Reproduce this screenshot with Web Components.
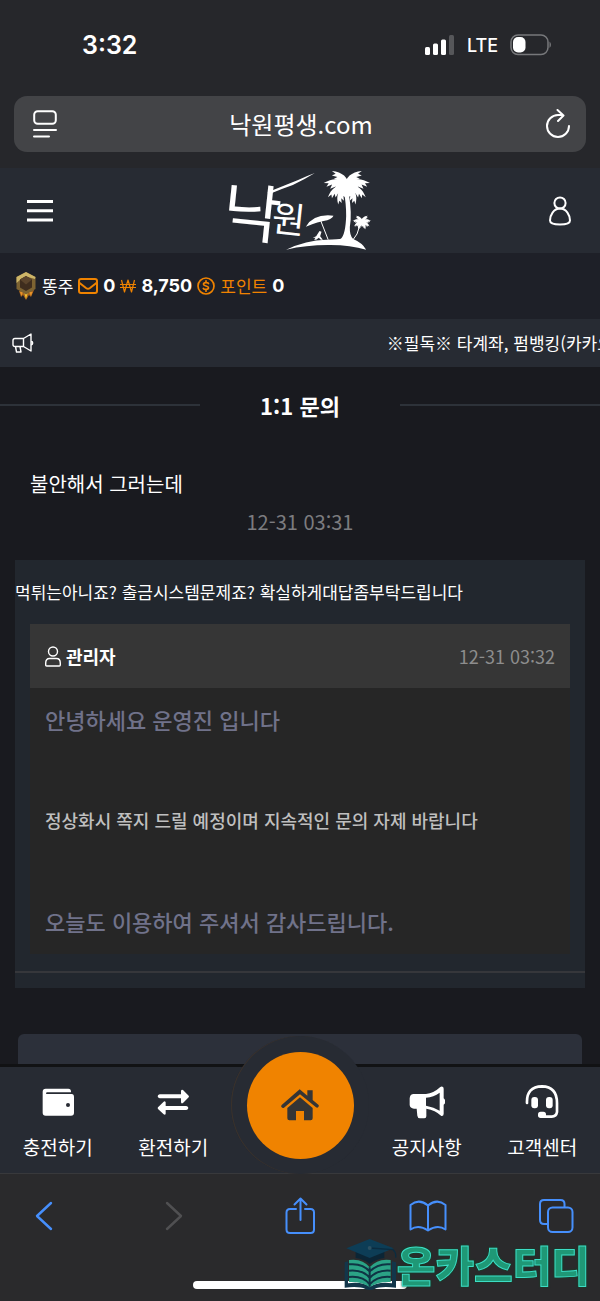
<!DOCTYPE html>
<html lang="ko">
<head>
<meta charset="utf-8">
<meta name="viewport" content="width=device-width, initial-scale=1">
<title>1:1 문의</title>
<style>
    html, body {
        margin: 0;
        height: 100%;
        background: #191a1f;
    }

    body {
        font-family: "Noto Sans CJK KR", sans-serif;
        color: #fff;
    }
</style>
</head>
<body>

<phone-screen>
    <status-bar slot="top" time="3:32" network="LTE"></status-bar>
    <address-bar slot="top">낙원평생.com</address-bar>

    <site-header></site-header>
    <member-bar name="똥주" notes="0" cash="8,750" points="0"></member-bar>
    <notice-ticker>※필독※ 타계좌, 펌뱅킹(카카오</notice-ticker>
    <page-title>1:1 문의</page-title>
    <inquiry-post date="12-31 03:31">
        <span slot="subject">불안해서 그러는데</span>
        먹튀는아니죠? 출금시스템문제죠? 확실하게대답좀부탁드립니다
        <admin-reply slot="reply" author="관리자" date="12-31 03:32">
            <span slot="greeting">안녕하세요 운영진 입니다</span>
            정상화시 쪽지 드릴 예정이며 지속적인 문의 자제 바랍니다
            <span slot="closing">오늘도 이용하여 주셔서 감사드립니다.</span>
        </admin-reply>
    </inquiry-post>
    <next-panel></next-panel>

    <site-nav slot="bottom">
        <nav-item icon="wallet">충전하기</nav-item>
        <nav-item icon="exchange">환전하기</nav-item>
        <home-button></home-button>
        <nav-item icon="horn">공지사항</nav-item>
        <nav-item icon="headset">고객센터</nav-item>
    </site-nav>
    <browser-toolbar slot="bottom"></browser-toolbar>
    <corner-mark slot="bottom">온카스터디</corner-mark>
</phone-screen>

<script>
const icons = {
    reader: `<svg width="24" height="28" viewBox="0 0 24 28" fill="none" stroke="currentColor" stroke-width="2" stroke-linecap="round">
        <rect x="1.2" y="1.2" width="21.6" height="12.6" rx="3.5"/><path d="M1 20h22M1 26.500h15"/></svg>`,
    reload: `<svg width="26" height="30" viewBox="0 0 26 30" fill="none" stroke="currentColor" stroke-width="2" stroke-linecap="round" stroke-linejoin="round">
        <path d="M24 17a11 11 0 1 1-11-11h5M12.500 1l6 5.500-5.500 5.500"/></svg>`,
    menu: `<svg width="26" height="22" viewBox="0 0 26 22" fill="currentColor">
        <path d="M0 0h26v3H0zM0 9.300h26v3H0zM0 18.500h26v3H0z"/></svg>`,
    person: `<svg width="24" height="30" viewBox="0 0 24 30" fill="none" stroke="currentColor" stroke-width="2">
        <circle cx="12" cy="7" r="5.600"/><path d="M12 12.600c-6.500 0-10 6.500-10 12 0 3 5 4 10 4s10-1 10-4c0-5.500-3.500-12-10-12z"/></svg>`,
    badge: `<svg width="22" height="30" viewBox="0 0 22 30">
        <path d="M4 20l2 6 2-2 3 5 3-5 2 2 3-7z" fill="#a8641c"/><path d="M9 21l2 7 2-7z" fill="#f5c332"/>
        <path d="M5 21l1.500 4L8 21zM14 21l2 4 1.500-4z" fill="#e8932a"/>
        <path d="M11 1l9.500 5v12L11 23.500 1.500 18V6z" fill="#7d6332"/>
        <path d="M11 1L1.500 6v6L6 8l5-2.500L20 8l.5-2z" fill="#cdb568"/>
        <path d="M11 5l6 3.500v8L11 20l-6-3.500v-8z" fill="#3f2d1e"/><path d="M11 5l6 3.500-6 5-6-5z" fill="#5b442c"/></svg>`,
    mail: `<svg width="20" height="16" viewBox="0 0 20 16" fill="none" stroke="currentColor" stroke-width="2" stroke-linejoin="round">
        <rect x="1" y="1" width="18" height="14" rx="2"/><path d="M1 4.500l7 5.500q2 1.400 4 0l7-5.500"/></svg>`,
    won: `<svg width="16" height="14" viewBox="0 0 16 14" fill="none" stroke="currentColor" stroke-width="1.200" stroke-linejoin="round">
        <path d="M1.500 1l3 12L8 1l3.500 12 3-12M0 5.500h16M0 8.500h16"/></svg>`,
    coin: `<svg width="18" height="18" viewBox="0 0 18 18" fill="none" stroke="currentColor" stroke-width="1.700" stroke-linecap="round">
        <circle cx="9" cy="9" r="8"/><path d="M11.500 6.500C11 5.300 6.500 5 6.500 7.200c0 2.300 5 1.300 5 3.600 0 2.200-4.500 2-5.200.6M9 3.800v1.400M9 12.700v1.500"/></svg>`,
    megaphone: `<svg width="22" height="20" viewBox="0 0 22 20" fill="none" stroke="currentColor" stroke-width="1.400" stroke-linejoin="round">
        <path d="M3 5.500h8.500L19 1v17l-7.500-4.500H3q-2 0-2-2v-4q0-2 2-2zM11.500 5.500v8M3.500 13.500L4.500 19h4.500l-1-5.500M19 8q1.700.5 1.700 2T19 12"/></svg>`,
    user: `<svg width="16" height="21" viewBox="0 0 16 21" fill="none" stroke="currentColor" stroke-width="1.400">
        <circle cx="8" cy="5.500" r="4.500"/><path d="M4.500 12.500h7q3.800 0 3.800 4.500v2q0 1-1 1H1.700q-1 0-1-1v-2q0-4.500 3.800-4.500z"/></svg>`,
    // the bar icons share one 36x34 frame, drawn at three units per pixel
    wallet: `<svg width="36" height="34" viewBox="0 0 108 102" fill="currentColor">
        <path d="M17 11h68q8 0 8 9v2H22q-4 0-4 3t4 2h73q7 0 7 9v47q0 9-9 9H17q-9 0-9-9V20q0-9 9-9z"/><circle cx="84" cy="60" r="6" fill="#272b33"/></svg>`,
    exchange: `<svg width="36" height="34" viewBox="0 0 108 102" fill="currentColor">
        <path d="M14 28h64V17q2-5 6-2l17 17q2 2 0 5L84 54q-5 3-6-2V40H14q-6-1-6-6t6-6zM94 63H32V52q-2-5-6-2L9 67q-2 2 0 5l17 16q5 3 6-2V75h62q6-1 6-6t-6-6z"/></svg>`,
    horn: `<svg width="36" height="34" viewBox="0 0 108 102" fill="currentColor">
        <path fill-rule="evenodd" d="M14 27h37q23-2 42-20 5-5 9-1 2 2 2 6v28q5 4 5 10t-5 9v27q0 8-7 7-18-18-45-22v20q1 9-6 9H33q-7 0-8-8l-2-21h-8Q3 70 2 60V40q1-13 12-13zM51 38v24q24 4 41 15V23Q74 36 51 38z"/></svg>`,
    headset: `<svg width="36" height="34" viewBox="0 0 108 102" fill="currentColor">
        <path d="M9 54q-2-49 45-50 45 1 45 50v27q-2 13-16 14H54" fill="none" stroke="currentColor" stroke-width="8" stroke-linecap="round"/>
        <rect x="22" y="36" width="20" height="34" rx="9"/><rect x="66" y="36" width="20" height="34" rx="9"/><rect x="42" y="80" width="24" height="19" rx="8"/></svg>`,
    home: `<svg width="38" height="32" viewBox="0 0 114 96" fill="currentColor">
        <path d="M56 1L79 20V4h16v29l17 14q3 3 0 7t-7 1L57 16 9 56q-4 2-7-1t0-7zM57 25l38 32v31q0 6-6 6H69V66H45v28H25q-6 0-6-6V57z"/></svg>`,
    back: `<svg width="36" height="40" viewBox="0 0 36 40" fill="none" stroke="currentColor" stroke-width="2.400" stroke-linecap="round" stroke-linejoin="round"><path d="M25 7L11 20l14 13"/></svg>`,
    forward: `<svg width="36" height="40" viewBox="0 0 36 40" fill="none" stroke="currentColor" stroke-width="2.400" stroke-linecap="round" stroke-linejoin="round"><path d="M13 7l14 13-14 13"/></svg>`,
    share: `<svg width="36" height="40" viewBox="0 0 36 40" fill="none" stroke="currentColor" stroke-width="2" stroke-linecap="round" stroke-linejoin="round">
        <path d="M14 13H8q-3.500 0-3.500 3.500v17Q4.500 37 8 37h20.500q3.500 0 3.500-3.500v-17q0-3.500-3.500-3.500H23M18.500 24V2.500M12.500 8.500l6-6 6 6"/></svg>`,
    book: `<svg width="38" height="34" viewBox="0 0 38 34" fill="none" stroke="currentColor" stroke-width="2" stroke-linejoin="round">
        <path d="M19 6.500Q10-1 1.500 6v24.500q8-5.500 17.500 1 9.500-6.500 17.500-1V6Q28-1 19 6.500zM19 6.500v25"/></svg>`,
    tabs: `<svg width="36" height="36" viewBox="0 0 36 36" fill="none" stroke="currentColor" stroke-width="2">
        <path d="M9.500 26H6q-4 0-4-4V6q0-4 4-4h16.500q4 0 4 4v3.500"/><rect x="10" y="9.500" width="24.500" height="24.500" rx="4.500"/></svg>`
};

class BaseElement extends HTMLElement {
    constructor() {
        super();
        const shadow = this.attachShadow({mode: "open"});
        shadow.innerHTML = `
            <style>
                svg { display: block; flex: none; }
                button, a {
                    display: flex;
                    align-items: center;
                    justify-content: center;
                    margin: 0;
                    padding: 0;
                    border: 0;
                    background: none;
                    color: inherit;
                    font: inherit;
                    text-decoration: none;
                }
            </style>
            ${this.render()}
        `;
    }

    attr(name) {
        return this.getAttribute(name) || "";
    }
}

class PhoneScreen extends BaseElement {
    render() {
        return `
            <style>
                :host {
                    display: flex;
                    flex-direction: column;
                    height: 100vh;
                    position: relative;
                    overflow: hidden;
                }
                .top { background: #26272b; }
                main {
                    flex: 1;
                    min-height: 0;
                    overflow: hidden;
                    display: flex;
                    flex-direction: column;
                }
            </style>
            <div class="top"><slot name="top"></slot></div>
            <main><slot></slot></main>
            <slot name="bottom"></slot>
        `;
    }
}

class StatusBar extends BaseElement {
    render() {
        return `
            <style>
                :host {
                    display: flex;
                    align-items: center;
                    justify-content: space-between;
                    height: 90px;
                    padding: 0 48px 0 82px;
                    box-sizing: border-box;
                    font-family: Inter, sans-serif;
                }
                time { font-size: 25px; font-weight: 600; line-height: 32px; }
                .signals { display: flex; align-items: center; gap: 12px; font-size: 18px; font-weight: 500; }
            </style>
            <time>${this.attr("time")}</time>
            <div class="signals">
                <svg width="30" height="20" viewBox="0 0 30 20" fill="#fff">
                    <rect y="12" width="5" height="8" rx="1.500"/><rect x="8" y="8.500" width="5" height="11.500" rx="1.500"/>
                    <rect x="16" y="4.500" width="5" height="15.500" rx="1.500"/><rect x="24" width="5" height="20" rx="1.500" fill="#56575a"/>
                </svg>
                <span>${this.attr("network")}</span>
                <svg width="42" height="22" viewBox="0 0 42 22">
                    <rect x="1" y="1" width="37" height="19.500" rx="7" fill="none" stroke="#77787b" stroke-width="1.500"/>
                    <rect x="3" y="3" width="12.500" height="15.500" rx="5" fill="#fff"/>
                    <path d="M39.500 7.500q3 3 0 6.500z" fill="#77787b"/>
                </svg>
            </div>
        `;
    }
}

class AddressBar extends BaseElement {
    render() {
        return `
            <style>
                :host { display: block; padding: 6px 14px 16px; }
                .field {
                    display: flex;
                    align-items: center;
                    justify-content: space-between;
                    height: 56px;
                    padding: 0 15px 0 19px;
                    border-radius: 13px;
                    background: #434447;
                }
                .url { flex: 1; font-size: 24px; line-height: 36px; }
            </style>
            <div class="field">
                <button aria-label="페이지 메뉴">${icons.reader}</button>
                <button class="url"><slot></slot></button>
                <button aria-label="새로고침">${icons.reload}</button>
            </div>
        `;
    }
}

// one palm leaf, repeated round the crown
const frond = (angle, size) => `<path transform="rotate(${angle}) scale(${size})"
    d="M0-10C20-26 46-26 72-4L57-6 62 6 46-3 50 10 34 1 36 13 20 8 4 14z"/>`;
const fronds = size => [frond(-8, size), frond(-45, size * .95), frond(30, size * .9), frond(66, size * .8)].join("");
const palm = (x, y, size) => `<g transform="translate(${x} ${y})">
    <circle r="${20 * size}"/>${fronds(size)}<g transform="scale(-1 1)">${fronds(size)}</g></g>`;

class SiteHeader extends BaseElement {
    render() {
        return `
            <style>
                :host {
                    display: flex;
                    flex: none;
                    align-items: center;
                    justify-content: space-between;
                    height: 85px;
                    padding: 0 28px 0 27px;
                    background: #272b33;
                }
                .logo svg { overflow: visible; }
            </style>
            <button aria-label="메뉴">${icons.menu}</button>
            <a class="logo" href="#" aria-label="낙원">
                <svg width="142" height="84" viewBox="90 24 425 252" fill="#fff" font-family="Noto Sans CJK KR, sans-serif">
                    <text transform="rotate(6 150 160)" x="68" y="226" font-size="190" font-weight="400">낙</text>
                    <text transform="rotate(6 270 170)" x="216" y="215" font-size="108" font-weight="400">원</text>
                    <path d="M202 94q60-24 90-36 30-14 52-22-32 20-66 36-35 12-70 27z"/>
                    <path d="M258 266q60-29 120-30 40-1 44-3 14-12 16-68 0-38-6-66l14-1q10 60 3 100-1 26 10 36 28 12 39 32-50-15-115-14-65 0-125 14z"/>
                    <path d="M317 197q24-40 83-33-5 12-30 16-20 4-34 10z"/>
                    <path d="M362 180l22 56M478 196q-4 24-22 44" fill="none" stroke="#fff" stroke-width="3"/>
                    <path d="M338 230l10-4 10-16 6 2-4 14 8 10h-6l-6-6-8 6h-6l4-6z"/>
                    ${palm(440, 80, .98)}
                    ${palm(485, 185, .4)}
                </svg>
            </a>
            <button aria-label="내 정보">${icons.person}</button>
        `;
    }
}

class MemberBar extends BaseElement {
    render() {
        return `
            <style>
                :host {
                    display: flex;
                    flex: none;
                    align-items: center;
                    gap: 5px;
                    height: 66px;
                    padding: 0 15px;
                    background: #1e2028;
                    font-size: 17px;
                    line-height: 24px;
                }
                a { gap: 5px; color: #f08300; }
                b { color: #fff; font-family: Inter, sans-serif; font-size: 18px; font-weight: 700; }
            </style>
            ${icons.badge}<span>${this.attr("name")}</span>
            <a href="#" aria-label="쪽지">${icons.mail}<b>${this.attr("notes")}</b></a>
            <a href="#" aria-label="보유머니">${icons.won}<b>${this.attr("cash")}</b></a>
            <a href="#">${icons.coin}<span>포인트</span><b>${this.attr("points")}</b></a>
        `;
    }
}

class NoticeTicker extends BaseElement {
    render() {
        return `
            <style>
                :host {
                    display: flex;
                    flex: none;
                    align-items: center;
                    height: 48px;
                    padding-left: 12px;
                    background: #272b33;
                    overflow: hidden;
                }
                .track { flex: 1; min-width: 0; padding-left: 60%; white-space: nowrap; font-size: 17px; line-height: 24px; }
            </style>
            ${icons.megaphone}
            <div class="track"><slot></slot></div>
        `;
    }
}

class PageTitle extends BaseElement {
    render() {
        return `
            <style>
                :host {
                    display: grid;
                    flex: none;
                    grid-template-columns: 1fr 1fr 1fr;
                    align-items: center;
                    height: 76px;
                }
                :host::before, :host::after { content: ""; height: 2px; background: #2d3239; }
                h1 { margin: 0; text-align: center; font-size: 22px; font-weight: 700; line-height: 32px; }
            </style>
            <h1><slot></slot></h1>
        `;
    }
}

class InquiryPost extends BaseElement {
    render() {
        return `
            <style>
                :host { display: block; flex: none; padding: 22px 15px 0; }
                h2 { margin: 0; padding: 4px 15px; font-size: 20px; font-weight: 400; line-height: 30px; }
                time { display: block; text-align: center; color: #7c7c7f; font-size: 20px; line-height: 38px; }
                .content { margin-top: 19px; padding: 16px 0 15px; background: #22272e; }
                p { margin: 0 0 16px; font-size: 17px; line-height: 32px; }
                hr { margin: 17px 0 0; border: 0; height: 2px; background: #36373b; }
            </style>
            <h2><slot name="subject"></slot></h2>
            <time>${this.attr("date")}</time>
            <div class="content">
                <p><slot></slot></p>
                <slot name="reply"></slot>
                <hr>
            </div>
        `;
    }
}

class AdminReply extends BaseElement {
    render() {
        return `
            <style>
                :host { display: block; margin: 0 15px; background: #262626; }
                header {
                    display: flex;
                    align-items: center;
                    justify-content: space-between;
                    height: 64px;
                    padding: 0 15px;
                    background: #363636;
                    font-size: 18px;
                }
                .author { display: flex; align-items: center; gap: 5px; }
                time { color: #8d8d8d; }
                .body { padding: 15px 15px 17px; }
                p { margin: 0 0 69px; font-size: 18px; font-weight: 500; line-height: 32px; color: #bfbfbf; }
                .accent { font-size: 22px; color: #70728a; }
                p:last-child { margin: 0; }
            </style>
            <header>
                <span class="author">${icons.user}<b>${this.attr("author")}</b></span>
                <time>${this.attr("date")}</time>
            </header>
            <div class="body">
                <p class="accent"><slot name="greeting"></slot></p>
                <p><slot></slot></p>
                <p class="accent"><slot name="closing"></slot></p>
            </div>
        `;
    }
}

class NextPanel extends BaseElement {
    render() {
        return `
            <style>
                :host {
                    display: block;
                    flex: 1;
                    margin: 46px 18px 0;
                    border-radius: 6px 6px 0 0;
                    background: #2c303a;
                }
            </style>
        `;
    }
}

class SiteNav extends BaseElement {
    render() {
        return `
            <style>
                :host {
                    display: grid;
                    flex: none;
                    grid-template-columns: 1fr 1fr 138px 1fr 1fr;
                    height: 106px;
                    border-top: 3px solid #111214;
                    background: #272b33;
                }
            </style>
            <slot></slot>
        `;
    }
}

class NavItem extends BaseElement {
    render() {
        return `
            <style>
                :host { display: block; }
                a { flex-direction: column; gap: 14px; padding-top: 18px; font-size: 19px; line-height: 28px; white-space: nowrap; }
            </style>
            <a href="#">${icons[this.attr("icon")]}<span><slot></slot></span></a>
        `;
    }
}

class HomeButton extends BaseElement {
    render() {
        return `
            <style>
                :host { display: block; position: relative; }
                /* sits over the bar's upper edge */
                a {
                    position: absolute;
                    top: -31px;
                    left: 0;
                    right: 0;
                    aspect-ratio: 1;
                    border-radius: 50%;
                    background: #272b33;
                    box-shadow: inset 1px 0 0 #3b322b;
                }
                span {
                    display: flex;
                    align-items: center;
                    justify-content: center;
                    width: 107px;
                    height: 107px;
                    border-radius: 50%;
                    background: #f08300;
                    color: #353535;
                }
            </style>
            <a href="#" aria-label="홈"><span>${icons.home}</span></a>
        `;
    }
}

class BrowserToolbar extends BaseElement {
    render() {
        return `
            <style>
                :host {
                    display: block;
                    flex: none;
                    border-top: 1px solid #38393c;
                    padding: 20px 26px 12px;
                    background: #2a2a2c;
                    color: #468ffc;
                }
                .row { display: flex; justify-content: space-between; }
                button { width: 36px; height: 43px; }
                button:disabled { color: #505052; }
                .indicator { width: 40%; max-width: 214px; height: 8px; margin: 44px auto 0; border-radius: 4px; background: #fff; }
            </style>
            <div class="row">
                <button aria-label="뒤로">${icons.back}</button>
                <button aria-label="앞으로" disabled>${icons.forward}</button>
                <button aria-label="공유">${icons.share}</button>
                <button aria-label="책갈피">${icons.book}</button>
                <button aria-label="탭">${icons.tabs}</button>
            </div>
            <div class="indicator"></div>
        `;
    }
}

class CornerMark extends BaseElement {
    render() {
        return `
            <style>
                :host {
                    display: flex;
                    align-items: center;
                    position: absolute;
                    right: 10px;
                    bottom: 9px;
                    pointer-events: none;
                }
                span {
                    color: #1f9876;
                    font-size: 42px;
                    font-weight: 900;
                    line-height: 56px;
                    -webkit-text-stroke: 1px #3cdcc6;
                    filter: drop-shadow(0 0 1px #0a4a24);
                }
            </style>
            <svg width="54" height="52" viewBox="0 0 162 156">
                <path d="M5 73l10-3v66q42-6 66 10 26-16 66-10V70l12 3v76q-48-5-64 4-14 6-28 0-18-9-62-4z" fill="#12364a"/>
                <path d="M18 66q40-6 62 22 24-28 63-22v66q-38-2-63 16-24-18-62-16z" fill="#2ba386"/>
                <path d="M18 79q42-4 62 22 24-26 63-22M18 98q42-4 62 22 24-26 63-22M18 117q42-4 62 22 24-26 63-22M80 88v58" fill="none" stroke="#0f3444" stroke-width="6"/>
                <path d="M38 42v18q26 4 42 18 18-14 44-18V42z" fill="#0b2535"/>
                <path d="M80 3l72 28-72 29L10 31z" fill="#0d3d56"/>
                <path d="M80 30l70 5q10 8 8 24" fill="none" stroke="#0b2c40" stroke-width="4"/>
                <circle cx="80" cy="30" r="6" fill="#2b5062"/>
            </svg>
            <span><slot></slot></span>
        `;
    }
}

window.customElements.define("phone-screen", PhoneScreen);
window.customElements.define("status-bar", StatusBar);
window.customElements.define("address-bar", AddressBar);
window.customElements.define("site-header", SiteHeader);
window.customElements.define("member-bar", MemberBar);
window.customElements.define("notice-ticker", NoticeTicker);
window.customElements.define("page-title", PageTitle);
window.customElements.define("inquiry-post", InquiryPost);
window.customElements.define("admin-reply", AdminReply);
window.customElements.define("next-panel", NextPanel);
window.customElements.define("site-nav", SiteNav);
window.customElements.define("nav-item", NavItem);
window.customElements.define("home-button", HomeButton);
window.customElements.define("browser-toolbar", BrowserToolbar);
window.customElements.define("corner-mark", CornerMark);
</script>
</body>
</html>
